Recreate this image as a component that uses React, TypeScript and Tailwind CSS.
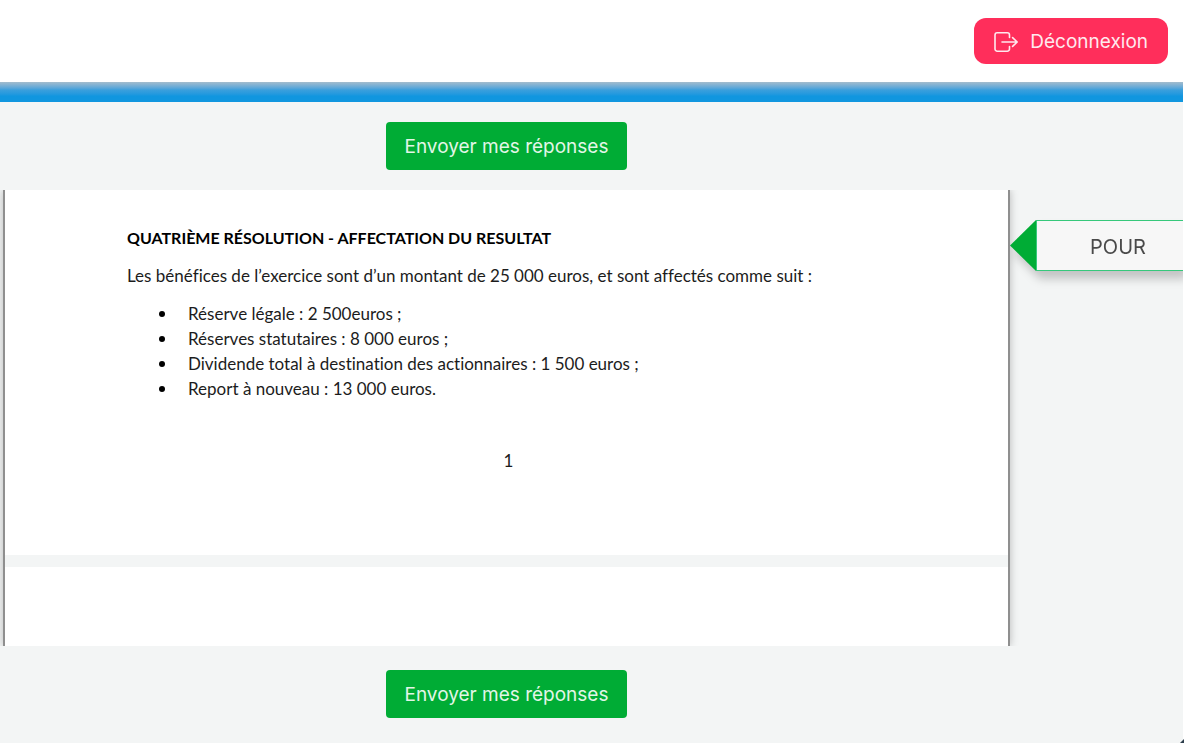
import { useState } from "react";

const allocations = [
  "Réserve légale : 2 500euros ;",
  "Réserves statutaires : 8 000 euros ;",
  "Dividende total à destination des actionnaires : 1 500 euros ;",
  "Report à nouveau : 13 000 euros.",
];

const LogoutIcon = () => (
  <svg viewBox="0 0 24 20" className="h-5 w-6" fill="none" stroke="currentColor" strokeWidth="1.6" strokeLinecap="round" strokeLinejoin="round" aria-hidden="true">
    <path d="M15.5 5.5V3A2.2 2.2 0 0 0 13.3 0.8H3.2A2.2 2.2 0 0 0 1 3v14a2.2 2.2 0 0 0 2.2 2.2h10.1a2.2 2.2 0 0 0 2.2-2.2v-2.5" />
    <path d="M8 10h15.2M18.6 5.6l4.6 4.4-4.6 4.4" />
  </svg>
);

function SendButton({ onClick }: { onClick: () => void }) {
  return (
    <button
      type="button"
      onClick={onClick}
      className="h-12 min-w-[241px] rounded bg-[#00ac35] px-4 pt-0.5 text-[19px] text-[#e2f6e7] hover:bg-[#009a2f]"
    >
      Envoyer mes réponses
    </button>
  );
}

function VoteTag({ vote, onToggle }: { vote: string; onToggle: () => void }) {
  return (
    <button type="button" onClick={onToggle} className="flex h-[51px] w-full drop-shadow-[4px_8px_5px_rgba(0,0,0,0.2)]">
      <svg viewBox="0 0 26 51" className="h-full w-[26px] shrink-0" aria-hidden="true">
        <path d="M26 0v51L0 25.5z" fill="#00ac35" />
      </svg>
      <span className="flex h-full flex-1 items-center justify-center border-y border-l border-[#36c87b] bg-[#f7f7f7] pt-0.5 pl-4 text-xl text-[#4a4a4a]">
        {vote}
      </span>
    </button>
  );
}

export default function App() {
  const [vote, setVote] = useState("POUR");
  const [sent, setSent] = useState(false);

  return (
    <div className="min-h-screen bg-white pr-[5px] pb-[5px] font-[Inter,sans-serif]">
      <header className="flex h-[82px] items-center justify-end px-[15px]">
        <button
          type="button"
          className="flex h-[46px] items-center gap-3 rounded-xl bg-[#ff2e5b] px-5 pt-0.5 text-[19px] text-[#ffe9ee] hover:bg-[#e8254f]"
        >
          <LogoutIcon />
          Déconnexion
        </button>
      </header>
      <div className="h-5 bg-linear-to-b from-[#a3bccd] via-[#3a9fdc] via-40% to-[#1096df] to-70%" />

      <main className="relative bg-[#f3f5f5] pb-[25px]">
        <div className="flex">
          <div className="min-w-0 flex-1">
            <div className="flex justify-center py-5 pl-[3px]">
              <SendButton onClick={() => setSent(true)} />
            </div>

            <div className="overflow-y-clip pl-[3px]">
              <article className="border-x-2 border-[#8f8f8f] bg-[#f3f5f5] font-[Lato,sans-serif] text-[17px] leading-[25px] text-[#1c1c1c] shadow-[0_0_8px_rgba(0,0,0,0.25)] [font-variant-ligatures:none]">
                <section className="flex h-[365px] flex-col gap-[13px] bg-white px-[122px] pt-[35px]">
                  <h1 className="text-base leading-[25px] font-bold text-black">QUATRIÈME RÉSOLUTION - AFFECTATION DU RESULTAT</h1>
                  <p>Les bénéfices de l’exercice sont d’un montant de 25 000 euros, et sont affectés comme suit :</p>
                  <ul>
                    {allocations.map((line) => (
                      <li key={line} className="flex items-center pl-8">
                        <span className="mr-[23px] size-[6px] rounded-full bg-black" />
                        {line}
                      </li>
                    ))}
                  </ul>
                  <p className="mt-[34px] pl-1 text-center">1</p>
                </section>
                <section className="mt-3 h-[79px] bg-white" />
              </article>
            </div>

            <div className="flex justify-center pt-6 pl-[3px]">
              <SendButton onClick={() => setSent(true)} />
            </div>
          </div>

          <aside className="relative w-[173px] shrink-0 overflow-x-clip pt-[118px]">
            <VoteTag vote={vote} onToggle={() => setVote(vote === "POUR" ? "CONTRE" : "POUR")} />
          </aside>
        </div>
        <svg viewBox="0 0 4 4" className="absolute -right-px bottom-0 size-1" aria-hidden="true">
          <path d="M4 0v4H0z" fill="#2c3e4c" />
        </svg>
        {sent && <p role="status" className="sr-only">Réponses envoyées</p>}
      </main>
    </div>
  );
}
